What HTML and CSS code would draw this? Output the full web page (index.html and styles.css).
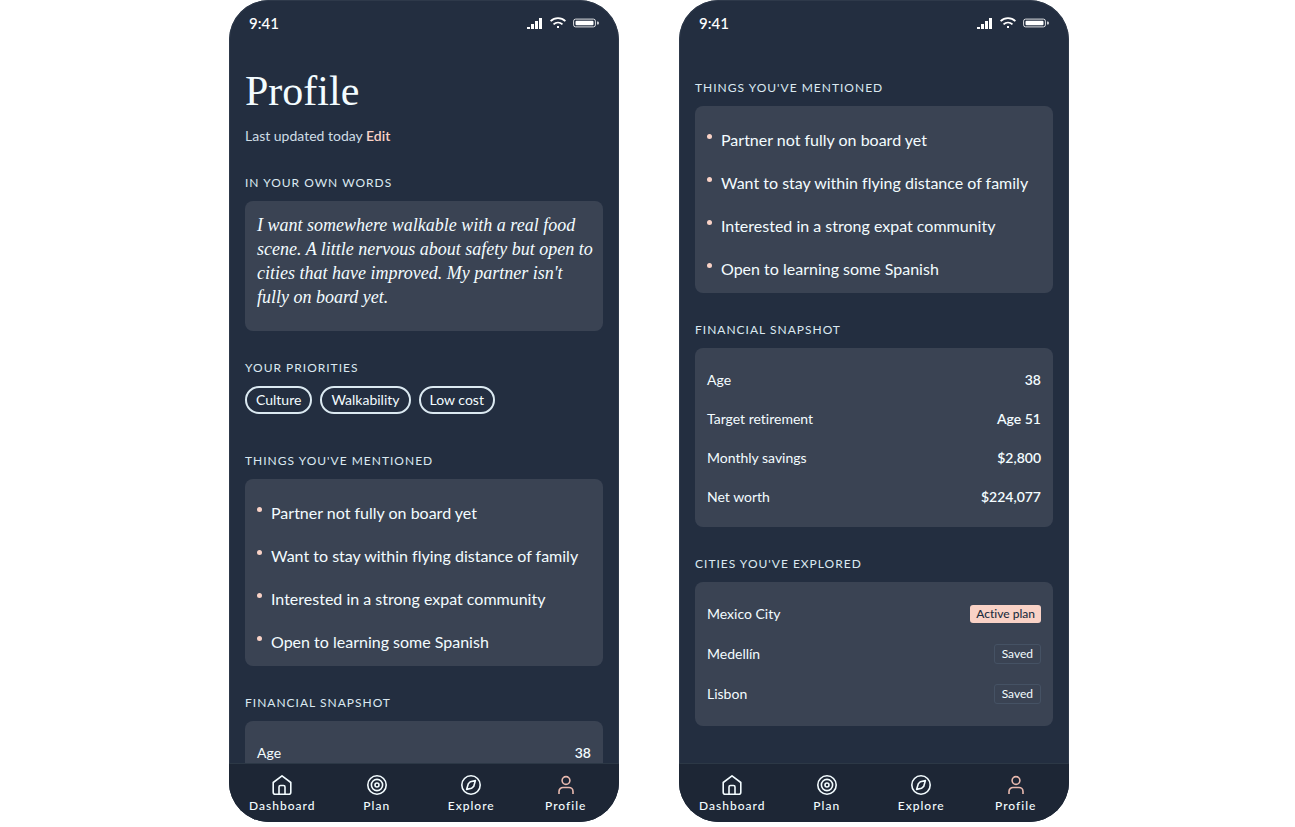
FILE: index.html
```
<!DOCTYPE html>
<html lang="en">
<head>
    <meta charset="UTF-8">
    <meta name="viewport" content="width=device-width, initial-scale=1.0">
    <title>Profile</title>
    <link rel="stylesheet" href="styles.css">
</head>
<body>
    <!-- shared icons -->
    <svg class="sprite" aria-hidden="true">
        <symbol id="signal" viewBox="0 0 16 12">
            <path d="M0 10h3v2H0zM4 7h3v5H4zM8 4h3v8H8zM12 1h3v11h-3z" fill="currentColor"/>
        </symbol>
        <symbol id="wifi" viewBox="0 0 16 12">
            <g fill="none" stroke="currentColor" stroke-width="1.8">
                <path d="M.6 4.200C4.800.2 11.200.2 15.400 4.200"/>
                <path d="M3.500 7.400c2.600-2.300 6.400-2.300 9 0"/>
            </g>
            <path d="M7 9h2v2H7z" fill="currentColor"/>
        </symbol>
        <symbol id="battery" viewBox="0 0 26 10">
            <rect x=".6" y="1.100" width="21.800" height="7.800" rx="2" fill="none" stroke="currentColor" opacity=".85"/>
            <rect x="2.500" y="2.800" width="18" height="4.400" rx="1" fill="currentColor"/>
            <path d="M24 3.500h1q1 0 1 1.500t-1 1.500h-1z" fill="currentColor" opacity=".75"/>
        </symbol>
        <symbol id="home" viewBox="0 0 20 20">
            <path d="M1.200 7.500 10 .8l8.800 6.700v9.700a2 2 0 0 1-2 2H3.200a2 2 0 0 1-2-2zM7 19v-7a1.500 1.500 0 0 1 1.500-1.500h3A1.500 1.500 0 0 1 13 12v7"/>
        </symbol>
        <symbol id="target" viewBox="0 0 20 20">
            <circle cx="10" cy="10" r="9.200"/><circle cx="10" cy="10" r="5.600"/><circle cx="10" cy="10" r="2"/>
        </symbol>
        <symbol id="compass" viewBox="0 0 20 20">
            <circle cx="10" cy="10" r="9.200"/><path d="m14.400 5.600-1.700 5.800-2 1.800-5.100 1.200 1.700-5.600 2-2z"/>
        </symbol>
        <symbol id="person" viewBox="0 0 20 20">
            <circle cx="10" cy="5.500" r="3.900"/><path d="M3 19v-2.500a4 4 0 0 1 4-4h6a4 4 0 0 1 4 4V19"/>
        </symbol>
    </svg>

    <main class="screens">
        <div class="phone">
            <div class="status">
                <span>9:41</span>
                <div class="status-icons">
                    <svg width="16" height="12"><use href="#signal"/></svg>
                    <svg width="16" height="12"><use href="#wifi"/></svg>
                    <svg width="26" height="10"><use href="#battery"/></svg>
                </div>
            </div>
            <div class="content">
                <header>
                    <h1>Profile</h1>
                    <p class="updated">Last updated today <a href="#edit">Edit</a></p>
                </header>
                <section>
                    <h2>In your own words</h2>
                    <blockquote class="card quote">I want somewhere walkable with a real food scene. A little nervous about safety but open to cities that have improved. My partner isn't fully on board yet.</blockquote>
                </section>
                <section>
                    <h2>Your priorities</h2>
                    <div class="pills">
                        <span class="pill">Culture</span>
                        <span class="pill">Walkability</span>
                        <span class="pill">Low cost</span>
                    </div>
                </section>
                <section>
                    <h2>Things you've mentioned</h2>
                    <ul class="card mentions">
                        <li>Partner not fully on board yet</li>
                        <li>Want to stay within flying distance of family</li>
                        <li>Interested in a strong expat community</li>
                        <li>Open to learning some Spanish</li>
                    </ul>
                </section>
                <section>
                    <h2>Financial snapshot</h2>
                    <dl class="card finance">
                        <div><dt>Age</dt><dd>38</dd></div>
                    </dl>
                </section>
            </div>
            <nav>
                <a href="#dashboard"><svg class="icon"><use href="#home"/></svg>Dashboard</a>
                <a href="#plan"><svg class="icon"><use href="#target"/></svg>Plan</a>
                <a href="#explore"><svg class="icon"><use href="#compass"/></svg>Explore</a>
                <a href="#profile" class="active"><svg class="icon"><use href="#person"/></svg>Profile</a>
            </nav>
        </div>

        <div class="phone">
            <div class="status">
                <span>9:41</span>
                <div class="status-icons">
                    <svg width="16" height="12"><use href="#signal"/></svg>
                    <svg width="16" height="12"><use href="#wifi"/></svg>
                    <svg width="26" height="10"><use href="#battery"/></svg>
                </div>
            </div>
            <div class="content scrolled">
                <section>
                    <h2>Things you've mentioned</h2>
                    <ul class="card mentions">
                        <li>Partner not fully on board yet</li>
                        <li>Want to stay within flying distance of family</li>
                        <li>Interested in a strong expat community</li>
                        <li>Open to learning some Spanish</li>
                    </ul>
                </section>
                <section>
                    <h2>Financial snapshot</h2>
                    <dl class="card finance">
                        <div><dt>Age</dt><dd>38</dd></div>
                        <div><dt>Target retirement</dt><dd>Age 51</dd></div>
                        <div><dt>Monthly savings</dt><dd>$2,800</dd></div>
                        <div><dt>Net worth</dt><dd>$224,077</dd></div>
                    </dl>
                </section>
                <section>
                    <h2>Cities you've explored</h2>
                    <ul class="card cities">
                        <li>Mexico City <span class="tag tag-active">Active plan</span></li>
                        <li>Medellín <span class="tag">Saved</span></li>
                        <li>Lisbon <span class="tag">Saved</span></li>
                    </ul>
                </section>
            </div>
            <nav>
                <a href="#dashboard"><svg class="icon"><use href="#home"/></svg>Dashboard</a>
                <a href="#plan"><svg class="icon"><use href="#target"/></svg>Plan</a>
                <a href="#explore"><svg class="icon"><use href="#compass"/></svg>Explore</a>
                <a href="#profile" class="active"><svg class="icon"><use href="#person"/></svg>Profile</a>
            </nav>
        </div>
    </main>
</body>
</html>
```

FILE: styles.css
```
* {
    box-sizing: border-box;
}

body, h1, h2, p, ul, dl, dd, blockquote {
    margin: 0;
    padding: 0;
}

body {
    background-color: #fff;
    color: #f3fcff;
    font-family: Lato, "Liberation Sans", sans-serif;
    font-size: 14px;
    line-height: 20px;
    font-variant-ligatures: none;
}

ul {
    list-style: none;
}

a {
    color: inherit;
    text-decoration: none;
}

.sprite {
    display: none;
}

.screens {
    display: flex;
    justify-content: center;
    gap: 60px;
    height: 100vh;
    padding: 0 0 5px 3px;
}

.phone {
    display: flex;
    flex-direction: column;
    flex: 0 1 390px;
    min-height: 0;
    overflow: hidden;
    border-radius: 40px;
    background-color: #232e40;
    box-shadow: inset 0 0 0 1px #2e394a;
}

/* status bar */
.status {
    display: flex;
    justify-content: space-between;
    align-items: center;
    flex-shrink: 0;
    height: 46px;
    padding: 0 20px;
    font-size: 15px;
    font-weight: 500;
    color: #fff;
}

.status-icons {
    display: flex;
    align-items: center;
    gap: 7px;
}

/* scrolling area */
.content {
    display: flex;
    flex-direction: column;
    gap: 28px;
    flex: 1;
    min-height: 0;
    overflow: hidden;
    padding: 20px 16px 0;
}

.scrolled {
    padding-top: 33px;
}

.content > * {
    flex-shrink: 0;
}

h1 {
    font-family: "Liberation Serif", serif;
    font-size: 42px;
    font-weight: 400;
    line-height: 50px;
}

.updated {
    margin-top: 10px;
    color: #cfdde6;
}

.updated a {
    color: #f9d2c6;
    font-weight: 600;
}

h2 {
    margin-bottom: 9px;
    color: #dbe9f1;
    font-size: 12px;
    font-weight: 400;
    line-height: 18px;
    letter-spacing: 1px;
    text-transform: uppercase;
}

.card {
    padding: 12px;
    border-radius: 8px;
    background-color: #3a4353;
}

.quote {
    padding-right: 8px;
    padding-bottom: 22px;
    font-family: "Liberation Serif", serif;
    font-size: 18px;
    font-style: italic;
    line-height: 24px;
}

.pills {
    display: flex;
    gap: 8px;
    margin-bottom: 10px;
}

.pill {
    padding: 2px 9px;
    border: 2px solid #dbe9f1;
    border-radius: 14px;
}

.mentions {
    display: grid;
    gap: 19px;
    padding-top: 22px;
    font-size: 16px;
    line-height: 24px;
}

.mentions li {
    display: flex;
    gap: 9px;
}

.mentions li::before {
    content: "";
    width: 5px;
    height: 5px;
    margin-top: 6px;
    border-radius: 50%;
    background-color: #f9d2c6;
}

.finance {
    padding-bottom: 11px;
}

.finance div, .cities li {
    display: flex;
    justify-content: space-between;
    align-items: center;
    height: 39px;
}

.finance dd {
    font-weight: 600;
}

.cities li {
    height: 40px;
}

.tag {
    padding: 0 7px;
    border: 1px solid #455264;
    border-radius: 3px;
    font-size: 12px;
    line-height: 18px;
}

.tag-active {
    padding: 0 6px;
    border: 0;
    background-color: #f9d2c6;
    color: #232e40;
    font-weight: 500;
}

/* bottom nav */
nav {
    display: grid;
    grid-template-columns: repeat(4, 1fr);
    flex-shrink: 0;
    height: 59px;
    padding: 11px 6px 0;
    border-top: 1px solid #2c3846;
    background-color: #1d2635;
}

nav a {
    display: flex;
    flex-direction: column;
    align-items: center;
    gap: 3px;
    font-size: 12px;
    font-weight: 500;
    line-height: 16px;
    letter-spacing: 1px;
}

.icon {
    width: 20px;
    height: 20px;
    fill: none;
    stroke: currentColor;
    stroke-width: 1.6;
    stroke-linejoin: round;
}

.active .icon {
    color: #e8b9ae;
}
```
